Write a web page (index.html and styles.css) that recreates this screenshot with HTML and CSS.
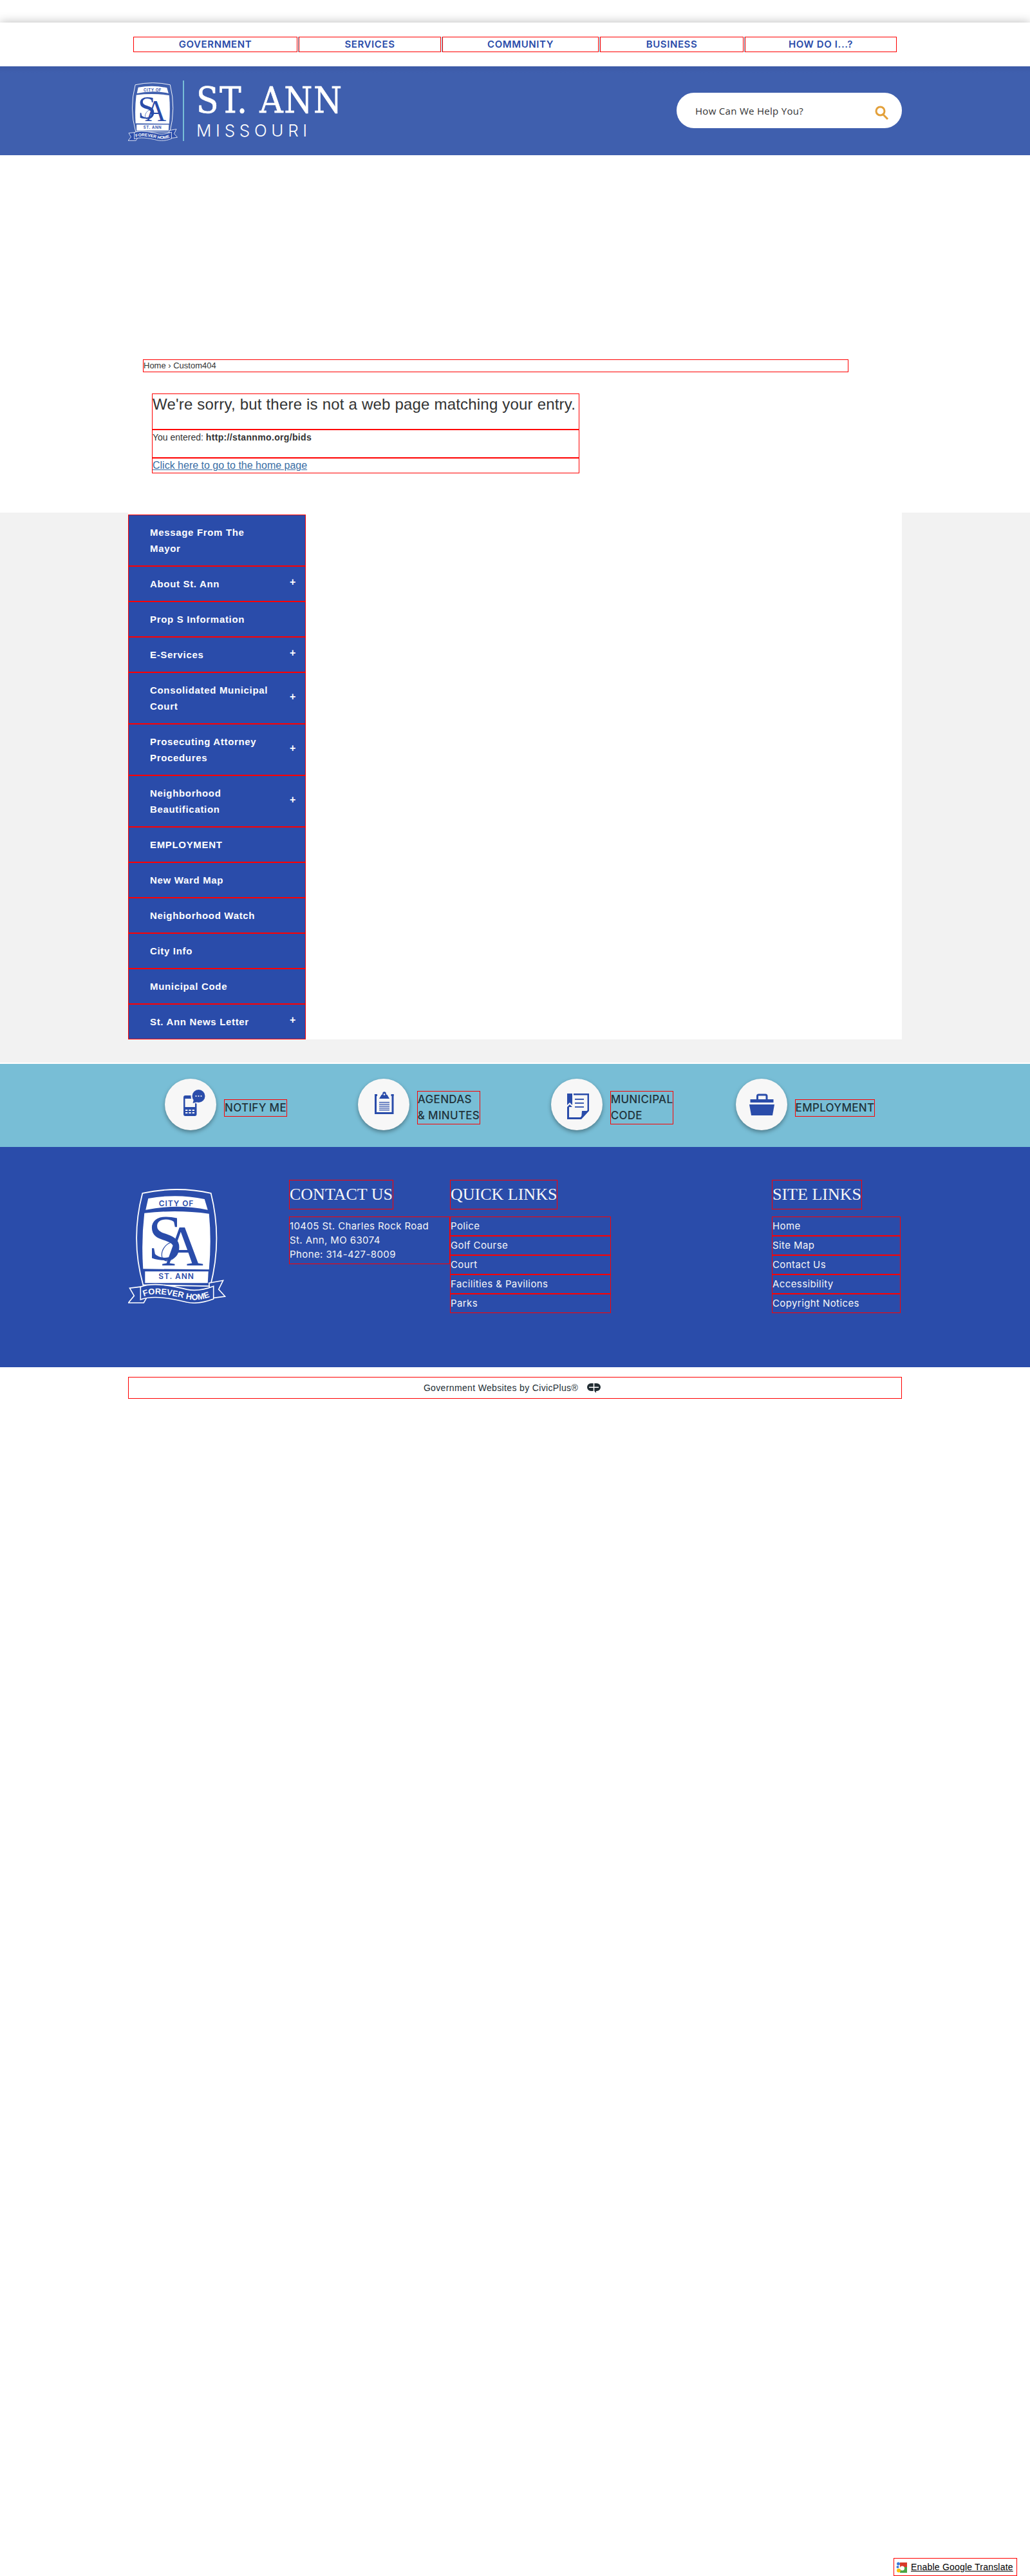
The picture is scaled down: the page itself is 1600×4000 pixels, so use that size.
FILE: index.html
```html
<!DOCTYPE html>
<html lang="en">
<head>
    <meta charset="UTF-8">
    <meta name="viewport" content="width=device-width, initial-scale=1.0">
    <title>St. Ann, Missouri</title>
    <link rel="stylesheet" href="styles.css">
</head>
<body>
    <!-- top navigation -->
    <div class="top-strip"></div>
    <nav class="top-nav">
        <a class="nav-gov" href="#">GOVERNMENT</a>
        <a class="nav-services" href="#">SERVICES</a>
        <a class="nav-community" href="#">COMMUNITY</a>
        <a class="nav-business" href="#">BUSINESS</a>
        <a class="nav-how" href="#">HOW DO I...?</a>
    </nav>

    <!-- banner -->
    <header class="banner">
        <div class="banner-inner">
            <a class="brand" href="#">
                <svg class="brand-crest" viewBox="0 -1 152 179">
                    <path class="crest-line" d="M22 6 Q76 -6 129 6 Q147 78 128 151 L23 149 Q3 78 22 6Z"/>
                    <path class="crest-panel" d="M31 14 Q76 6 119 15 L124 32 Q76 22 27 32Z"/>
                    <path class="crest-panel" d="M25 37 Q76 31 126 38 Q130 80 126 125 L23 124 Q20 80 25 37Z"/>
                    <path class="crest-panel" d="M26 128 H125 L124 146 H26Z"/>
                    <text class="crest-small" x="75" y="26" text-anchor="middle">CITY OF</text>
                    <text class="crest-small" x="75" y="140" text-anchor="middle">ST. ANN</text>
                    <text class="crest-letter" x="30" y="109" font-size="100">S</text>
                    <text class="crest-letter" x="52" y="118" font-size="90">A</text>
                    <ellipse class="crest-loop" cx="65" cy="97" rx="11" ry="16" transform="rotate(35 65 97)"/>
                    <path class="crest-ribbon" d="M19 152 L2 154 L9 166 L0 177 L24 177 L28 170Z"/>
                    <path class="crest-ribbon" d="M126 146 L148 142 L141 156 L151 167 L128 170Z"/>
                    <path class="crest-ribbon" d="M19 152 C35 146 60 148 91 156 C105 159 120 156 133 151 L133 171 C120 176 105 179 91 176 C60 168 35 166 19 172Z"/>
                    <path id="ribbonTop" class="crest-none" d="M24 167 C38 161 60 163 91 171 C105 174 118 172 132 166"/>
                    <text class="crest-motto"><textPath href="#ribbonTop">FOREVER HOME</textPath></text>
                </svg>
                <span class="brand-name">
                    <span class="brand-city">ST. ANN</span>
                    <span class="brand-state">MISSOURI</span>
                </span>
            </a>
            <form class="search">
                <span class="search-text">How Can We Help You?</span>
                <svg class="search-icon" viewBox="0 0 22 22">
                    <circle cx="8.5" cy="8.5" r="6.5"/>
                    <line x1="13" y1="14" x2="20" y2="21"/>
                </svg>
            </form>
        </div>
    </header>

    <!-- 404 message -->
    <section class="notice">
        <div class="breadcrumb">Home › Custom404</div>
        <div class="message">
            <h1>We're sorry, but there is not a web page matching your entry.</h1>
            <p>You entered: <strong>http://stannmo.org/bids</strong></p>
            <div class="home-link"><a href="#">Click here to go to the home page</a></div>
        </div>
    </section>

    <!-- side menu -->
    <section class="main">
        <div class="main-inner">
            <ul class="side-menu">
                <li><a href="#"><span class="side-text">Message From The Mayor</span></a></li>
                <li><a href="#"><span class="side-text">About St. Ann</span><span class="plus">+</span></a></li>
                <li><a href="#"><span class="side-text">Prop S Information</span></a></li>
                <li><a href="#"><span class="side-text">E-Services</span><span class="plus">+</span></a></li>
                <li><a href="#"><span class="side-text">Consolidated Municipal Court</span><span class="plus">+</span></a></li>
                <li><a href="#"><span class="side-text">Prosecuting Attorney Procedures</span><span class="plus">+</span></a></li>
                <li><a href="#"><span class="side-text">Neighborhood Beautification</span><span class="plus">+</span></a></li>
                <li><a href="#"><span class="side-text">EMPLOYMENT</span></a></li>
                <li><a href="#"><span class="side-text">New Ward Map</span></a></li>
                <li><a href="#"><span class="side-text">Neighborhood Watch</span></a></li>
                <li><a href="#"><span class="side-text">City Info</span></a></li>
                <li><a href="#"><span class="side-text">Municipal Code</span></a></li>
                <li><a href="#"><span class="side-text">St. Ann News Letter</span><span class="plus">+</span></a></li>
            </ul>
        </div>
    </section>

    <!-- quick buttons -->
    <section class="cta">
        <div class="cta-inner">
            <a class="cta-item" href="#">
                <svg class="cta-icon" viewBox="0 0 80 80">
                    <rect class="ink" x="29" y="26" width="20.5" height="32" rx="3"/>
                    <rect class="paper" x="31.5" y="31" width="15.5" height="13"/>
                    <rect class="paper" x="32" y="48" width="3.4" height="2"/>
                    <rect class="paper" x="37.3" y="48" width="3.4" height="2"/>
                    <rect class="paper" x="42.6" y="48" width="3.4" height="2"/>
                    <rect class="paper" x="32" y="52" width="3.4" height="2"/>
                    <rect class="paper" x="37.3" y="52" width="3.4" height="2"/>
                    <rect class="paper" x="42.6" y="52" width="3.4" height="2"/>
                    <circle class="paper" cx="52.5" cy="27" r="12"/>
                    <circle class="ink" cx="52.5" cy="27" r="10"/>
                    <path class="ink" d="M45 32 L43.5 38 L51 36Z"/>
                    <circle class="paper" cx="48.5" cy="27" r="1.1"/>
                    <circle class="paper" cx="52.5" cy="27" r="1.1"/>
                    <circle class="paper" cx="56.5" cy="27" r="1.1"/>
                </svg>
                <span class="cta-label">NOTIFY ME</span>
            </a>
            <a class="cta-item" href="#">
                <svg class="cta-icon" viewBox="0 0 80 80">
                    <rect class="ink" x="26" y="24" width="29.5" height="31"/>
                    <rect class="paper" x="29" y="27" width="23.5" height="25"/>
                    <path class="paper" d="M30 20 H52 V27 H30Z"/>
                    <path class="ink" d="M26 24 H30 V27 H26Z M51.5 24 H55.5 V27 H51.5Z"/>
                    <path class="ink" d="M33 31 L36 26 Q36 24.5 38 24.5 L38.5 21.5 Q41 19 43.5 21.5 L44 24.5 Q46 24.5 46 26 L49 31Z"/>
                    <circle class="paper" cx="41" cy="24.5" r="1.3"/>
                    <rect class="ink" x="33" y="36" width="16" height="1.3"/>
                    <rect class="ink" x="33" y="39" width="16" height="1.3"/>
                    <rect class="ink" x="33" y="42" width="16" height="1.3"/>
                    <rect class="ink" x="33" y="45" width="16" height="1.3"/>
                    <rect class="ink" x="33" y="48" width="16" height="1.3"/>
                </svg>
                <span class="cta-label">AGENDAS<br>&amp; MINUTES</span>
            </a>
            <a class="cta-item" href="#">
                <svg class="cta-icon" viewBox="0 0 80 80">
                    <path class="ink" d="M25 23 H33 V41 L29 37 L25 41Z"/>
                    <path class="ink" d="M35 23 H59 V50 L47 63 H25 V44 L29 40 L33 44 H28 V60 H45.5 L56.5 49 V25.5 H35Z"/>
                    <path class="ink" d="M48 50 H58 L47 62Z"/>
                    <rect class="ink" x="37" y="31" width="14" height="1.8"/>
                    <rect class="ink" x="37" y="37" width="14" height="1.8"/>
                    <rect class="ink" x="37" y="43" width="14" height="1.8"/>
                </svg>
                <span class="cta-label">MUNICIPAL<br>CODE</span>
            </a>
            <a class="cta-item" href="#">
                <svg class="cta-icon" viewBox="0 0 80 80">
                    <path class="ink-line" d="M33.5 32 V27 Q33.5 25 35.5 25 H46 Q48 25 48 27 V32"/>
                    <rect class="ink" x="22.5" y="32" width="36" height="5"/>
                    <path class="ink" d="M21 40 H60 L57 57 H24Z"/>
                </svg>
                <span class="cta-label">EMPLOYMENT</span>
            </a>
        </div>
    </section>

    <!-- footer -->
    <footer class="footer">
        <div class="footer-inner">
            <div class="footer-logo">
                <svg class="footer-crest" viewBox="0 -1 152 179">
                    <path class="crest-line" d="M22 6 Q76 -6 129 6 Q147 78 128 151 L23 149 Q3 78 22 6Z"/>
                    <path class="crest-panel" d="M31 14 Q76 6 119 15 L124 32 Q76 22 27 32Z"/>
                    <path class="crest-panel" d="M25 37 Q76 31 126 38 Q130 80 126 125 L23 124 Q20 80 25 37Z"/>
                    <path class="crest-panel" d="M26 128 H125 L124 146 H26Z"/>
                    <text class="crest-small" x="75" y="26" text-anchor="middle">CITY OF</text>
                    <text class="crest-small" x="75" y="140" text-anchor="middle">ST. ANN</text>
                    <text class="crest-letter" x="30" y="109" font-size="100">S</text>
                    <text class="crest-letter" x="52" y="118" font-size="90">A</text>
                    <ellipse class="crest-loop" cx="65" cy="97" rx="11" ry="16" transform="rotate(35 65 97)"/>
                    <path class="crest-ribbon" d="M19 152 L2 154 L9 166 L0 177 L24 177 L28 170Z"/>
                    <path class="crest-ribbon" d="M126 146 L148 142 L141 156 L151 167 L128 170Z"/>
                    <path class="crest-ribbon" d="M19 152 C35 146 60 148 91 156 C105 159 120 156 133 151 L133 171 C120 176 105 179 91 176 C60 168 35 166 19 172Z"/>
                    <path id="ribbonFoot" class="crest-none" d="M24 167 C38 161 60 163 91 171 C105 174 118 172 132 166"/>
                    <text class="crest-motto"><textPath href="#ribbonFoot">FOREVER HOME</textPath></text>
                </svg>
            </div>
            <div class="footer-col">
                <h3>CONTACT US</h3>
                <div class="address">
                    10405 St. Charles Rock Road<br>
                    St. Ann, MO 63074<br>
                    Phone: 314-427-8009
                </div>
            </div>
            <div class="footer-col">
                <h3>QUICK LINKS</h3>
                <ul class="footer-links">
                    <li><a href="#">Police</a></li>
                    <li><a href="#">Golf Course</a></li>
                    <li><a href="#">Court</a></li>
                    <li><a href="#">Facilities &amp; Pavilions</a></li>
                    <li><a href="#">Parks</a></li>
                </ul>
            </div>
            <div class="footer-col"></div>
            <div class="footer-col">
                <h3>SITE LINKS</h3>
                <ul class="footer-links">
                    <li><a href="#">Home</a></li>
                    <li><a href="#">Site Map</a></li>
                    <li><a href="#">Contact Us</a></li>
                    <li><a href="#">Accessibility</a></li>
                    <li><a href="#">Copyright Notices</a></li>
                </ul>
            </div>
        </div>
    </footer>

    <div class="credit">
        <span>Government Websites by CivicPlus®</span>
        <svg class="credit-logo" viewBox="0 0 23 16">
            <path d="M10.7 1 H7 a6 6 0 0 0 0 12 h3.7 V8 H4 V6.4 h6.7Z"/>
            <path d="M12.3 1 H16 a6 6 0 0 1 0 12 h-1 v3 l-2.7 -3 V8 H19 V6.4 h-6.7Z"/>
        </svg>
    </div>

    <!-- translate widget -->
    <a class="translate" href="#">
        <svg class="translate-icon" viewBox="0 0 17 17">
            <rect x="6" y="1" width="11" height="8" fill="#d93a2b"/>
            <rect x="6" y="8" width="11" height="9" fill="#4aa345"/>
            <circle cx="9.5" cy="10" r="3.5" fill="#fff"/>
            <circle cx="3.5" cy="3" r="2.5" fill="#3b78d8"/>
            <circle cx="2.5" cy="8" r="2" fill="#3b78d8"/>
            <circle cx="4" cy="13.5" r="3" fill="#f4c20d"/>
        </svg>
        <span>Enable Google Translate</span>
    </a>
</body>
</html>
```

FILE: styles.css
```css
/* page */
body {
    margin: 0;
    background-color: #fff;
    color: #333;
    font-family: "Liberation Sans", Arial, sans-serif;
}

a {
    color: inherit;
    text-decoration: none;
}

ul {
    list-style: none;
    margin: 0;
    padding: 0;
}

/* crest pieces */
.crest-line {
    fill: none;
    stroke: #fff;
    stroke-width: 1.8;
}

.crest-panel {
    fill: #fff;
}

.crest-small {
    fill: #2a4caa;
    font-family: Inter, sans-serif;
    font-size: 12px;
    font-weight: 600;
    letter-spacing: 1px;
}

.crest-letter {
    fill: #2a4caa;
    font-family: "Liberation Serif", serif;
}

.crest-loop {
    fill: none;
    stroke: #2a4caa;
    stroke-width: 1.2;
}

.crest-ribbon {
    fill: #2a4caa;
    stroke: #fff;
    stroke-width: 1.6;
}

.crest-none {
    fill: none;
}

.crest-motto {
    fill: #fff;
    font-family: "Liberation Sans", sans-serif;
    font-size: 13px;
    font-weight: bold;
}

/* top navigation */
.top-strip {
    height: 35px;
    background-color: #fff;
}

.top-nav {
    display: flex;
    box-sizing: border-box;
    height: 68px;
    padding: 22px 207px 0;
    gap: 2px;
    align-items: flex-start;
    background-color: #fff;
    box-shadow: 0 0 15px rgba(0, 0, 0, 0.28);
}

.top-nav a {
    box-sizing: border-box;
    height: 24px;
    border: 1px solid #f00;
    color: #2a4caa;
    font-family: Inter, sans-serif;
    font-size: 15px;
    font-weight: 600;
    line-height: 22px;
    letter-spacing: 0.6px;
    text-align: center;
}

.top-nav a + a {
    box-shadow: -1px 0 0 #78bed6;
}

.nav-gov { width: 255px; }
.nav-services { width: 221px; }
.nav-community { width: 243px; }
.nav-business { width: 223px; }
.nav-how { width: 236px; }

/* banner */
.banner {
    height: 138px;
    background: linear-gradient(#3c5aa6, #3f5fae 10px);
}

.banner-inner {
    display: flex;
    width: 1202px;
    height: 138px;
    margin: 0 auto;
    justify-content: space-between;
    align-items: flex-start;
}

.brand {
    display: flex;
    color: #fff;
}

.brand-crest {
    width: 77px;
    height: 91px;
    margin-top: 25px;
}

.brand-name {
    display: flex;
    flex-direction: column;
    height: 94px;
    margin: 22px 0 0 8px;
    padding-left: 19px;
    border-left: 2px solid #78bed6;
}

.brand-city {
    margin-top: 2px;
    font-family: "DejaVu Serif Condensed", "DejaVu Serif", serif;
    font-size: 56px;
    line-height: 58px;
    letter-spacing: 1.6px;
    -webkit-text-stroke: 0.6px #fff;
}

.brand-state {
    margin-top: 3px;
    font-family: Inter, sans-serif;
    font-size: 26px;
    font-weight: 300;
    line-height: 30px;
    letter-spacing: 6.7px;
}

.search {
    display: flex;
    box-sizing: border-box;
    width: 350px;
    height: 55px;
    margin: 41px 0 0;
    padding: 0 20px 0 29px;
    justify-content: space-between;
    align-items: center;
    border-radius: 27px;
    background-color: #fff;
}

.search-text {
    font-family: "Open Sans", sans-serif;
    font-size: 15px;
    letter-spacing: 0.3px;
    color: #333;
}

.search-icon {
    width: 22px;
    height: 22px;
    margin-top: 7px;
    fill: none;
    stroke: #e3a03a;
    stroke-width: 3;
}

/* 404 message */
.notice {
    box-sizing: border-box;
    height: 555px;
    padding: 317px 0 0 222px;
}

.breadcrumb {
    box-sizing: border-box;
    width: 1096px;
    height: 20px;
    border: 1px solid #f00;
    font-size: 13px;
    line-height: 18px;
}

.message {
    width: 664px;
    margin: 33px 0 0 14px;
}

.message h1 {
    margin: 0;
    padding-bottom: 22px;
    border: 1px solid #f00;
    font-size: 24px;
    font-weight: normal;
    line-height: 32px;
    letter-spacing: 0.2px;
}

.message p {
    margin: 0;
    padding-bottom: 20px;
    border: 1px solid #f00;
    font-size: 14px;
    line-height: 22px;
}

.message strong {
    letter-spacing: 0.35px;
}

.home-link {
    border: 1px solid #f00;
    font-size: 16px;
    line-height: 22px;
}

.home-link a {
    color: #3a6ea5;
    text-decoration: underline;
}

/* side menu */
.main {
    height: 854px;
    margin-bottom: 2px;
    background-color: #f2f2f2;
}

.main-inner {
    box-sizing: border-box;
    width: 1202px;
    height: 818px;
    margin: 0 auto;
    padding-top: 3px;
    background-color: #fff;
}

.side-menu {
    width: 276px;
}

.side-menu a {
    display: flex;
    padding: 14px 15px 14px 33px;
    justify-content: space-between;
    align-items: center;
    border: 1px solid #f00;
    background-color: #2a4caa;
    color: #fff;
    font-size: 15px;
    font-weight: bold;
    line-height: 25px;
    letter-spacing: 0.67px;
}

.side-text {
    width: 191px;
}

.plus {
    width: 9px;
    padding-bottom: 5px;
    font-size: 16px;
    line-height: 20px;
    letter-spacing: 0;
}

/* quick buttons */
.cta {
    box-sizing: border-box;
    height: 129px;
    padding-top: 23px;
    background-color: #78bed6;
}

.cta-inner {
    display: grid;
    grid-template-columns: repeat(4, 1fr);
    width: 1200px;
    margin: 0 auto;
    padding-left: 2px;
}

.cta-item {
    display: flex;
    justify-content: center;
    align-items: center;
    gap: 12px;
}

.cta-icon {
    width: 80px;
    height: 80px;
    border-radius: 50%;
    background-color: #f7f7f7;
    box-shadow: 0 3px 6px rgba(0, 0, 0, 0.35);
}

.ink {
    fill: #2a4caa;
}

.paper {
    fill: #f7f7f7;
}

.ink-line {
    fill: none;
    stroke: #2a4caa;
    stroke-width: 3;
}

.cta-label {
    margin-top: 10px;
    border: 1px solid #f00;
    color: #22333b;
    font-family: Inter, sans-serif;
    font-size: 17px;
    font-weight: 500;
    line-height: 25px;
    letter-spacing: 0.3px;
}

/* footer */
.footer {
    box-sizing: border-box;
    height: 342px;
    padding-top: 51px;
    background-color: #2a4caa;
    color: #f6f6f6;
}

.footer-inner {
    display: grid;
    grid-template-columns: 250px 250px 250px 250px 200px;
    width: 1202px;
    margin: 0 auto;
}

.footer-crest {
    width: 152px;
    height: 178px;
    margin-top: 14px;
}

.footer-col h3 {
    display: table;
    box-sizing: border-box;
    height: 46px;
    margin: 0 0 11px;
    border: 1px solid #f00;
    font-family: "Liberation Serif", serif;
    font-size: 26px;
    font-weight: normal;
    line-height: 44px;
}

.address {
    box-sizing: border-box;
    height: 74px;
    padding: 3px 0 0;
    border: 1px solid #f00;
    font-family: Inter, sans-serif;
    font-size: 15px;
    line-height: 22px;
    letter-spacing: 0.4px;
}

.footer-links a {
    display: block;
    box-sizing: border-box;
    height: 30px;
    border: 1px solid #f00;
    font-family: Inter, sans-serif;
    font-size: 15px;
    line-height: 28px;
    letter-spacing: 0.4px;
}

/* credit line */
.credit {
    display: flex;
    box-sizing: border-box;
    width: 1202px;
    height: 34px;
    margin: 15px auto 0;
    padding-right: 8px;
    justify-content: center;
    align-items: center;
    gap: 13px;
    border: 1px solid #f00;
    color: #222d33;
    font-size: 14px;
    letter-spacing: 0.35px;
}

.credit-logo {
    width: 23px;
    height: 16px;
    fill: #222d33;
}

/* translate widget */
.translate {
    position: fixed;
    right: 20px;
    bottom: 0;
    display: flex;
    box-sizing: border-box;
    width: 192px;
    height: 28px;
    padding-left: 3px;
    align-items: center;
    gap: 6px;
    border: 1px solid #f00;
    background-color: #fff;
    color: #000;
    font-size: 14px;
    letter-spacing: 0.2px;
}

.translate span {
    text-decoration: underline;
}

.translate-icon {
    width: 17px;
    height: 17px;
}
```
